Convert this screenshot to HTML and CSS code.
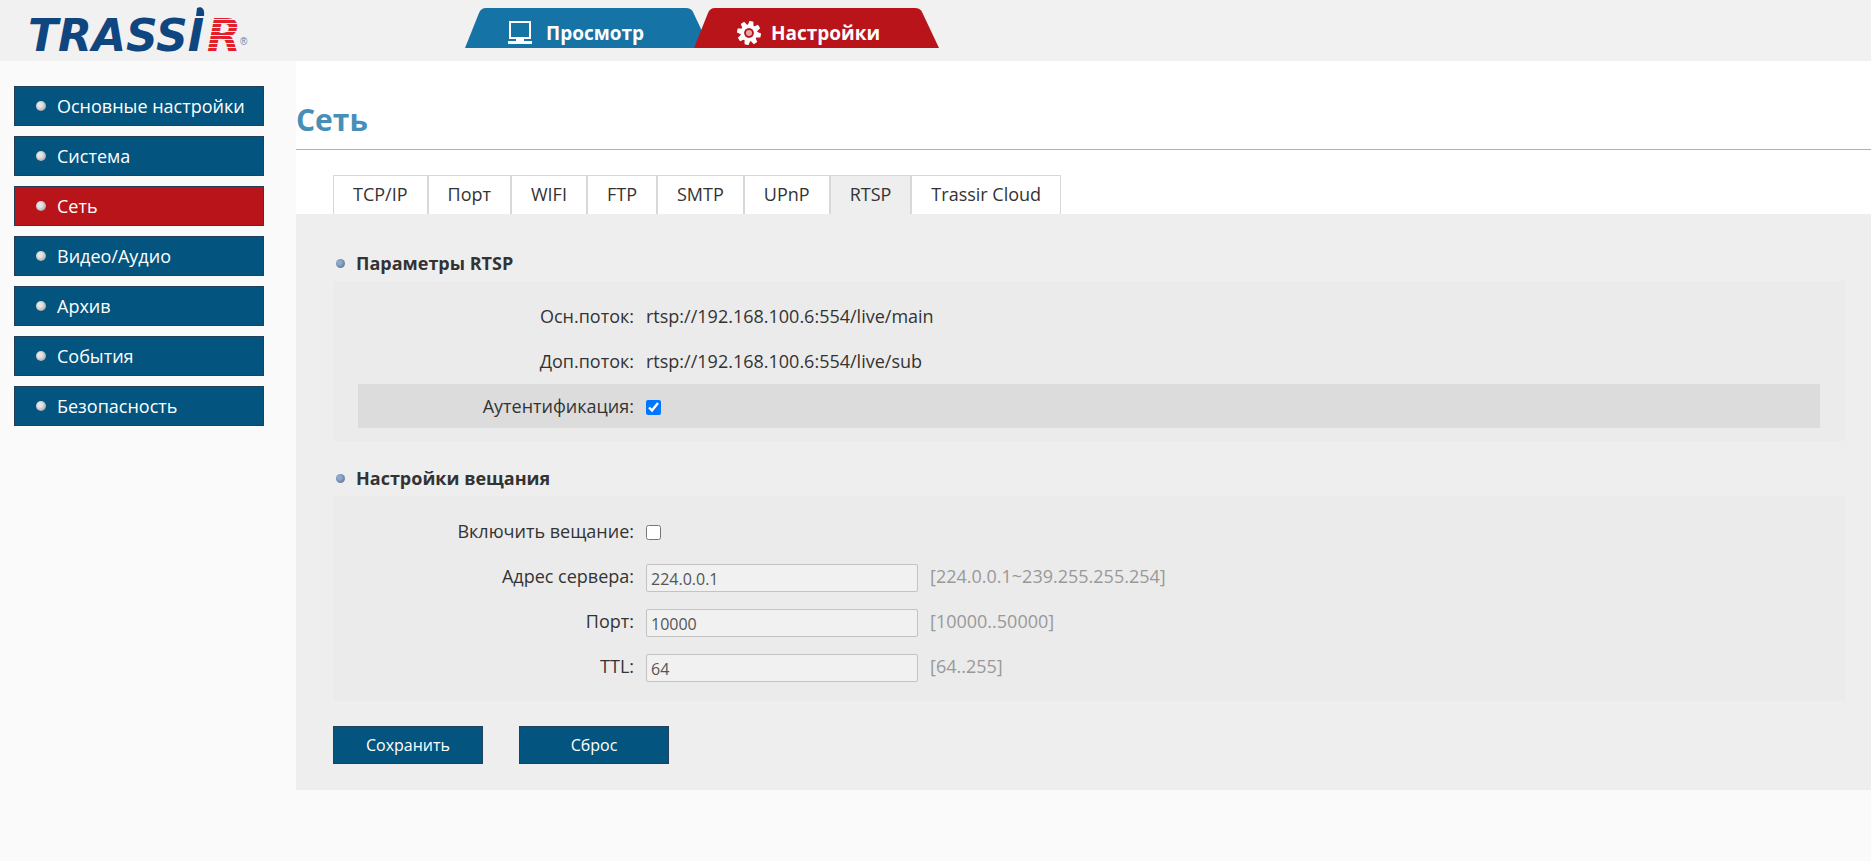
FILE: index.html
```html
<!DOCTYPE html>
<html lang="ru">
<head>
<meta charset="utf-8">
<meta name="viewport" content="width=device-width, initial-scale=1">
<title>TRASSIR</title>
<link rel="stylesheet" href="styles.css">
</head>
<body>
<header class="header">
  <div class="brand">
    <svg class="logo" width="240" height="60" viewBox="0 0 240 60" role="img" aria-label="TRASSIR">
      <defs>
        <pattern id="stripes" width="8" height="4" patternUnits="userSpaceOnUse">
          <rect width="8" height="3" fill="#e2202c"/>
        </pattern>
      </defs>
      <text class="logo-main" x="8" y="51">TRASSI</text>
      <path d="M177 8c4-2 8 0 7 8h-8z" fill="#0f467f"/>
      <text class="logo-accent" x="187" y="51" fill="url(#stripes)">R</text>
      <text class="logo-mark" x="220" y="45">®</text>
    </svg>
  </div>
  <nav class="modes">
    <a class="mode" href="#view">
      <svg width="24" height="24" viewBox="0 0 24 24" aria-hidden="true">
        <path d="M2 1h20v16H2z" fill="none" stroke="#fff" stroke-width="2"/>
        <path d="M8 18h8v2h8v3H0v-3h8z" fill="#fff"/>
      </svg>
      Просмотр
    </a>
    <a class="mode mode-active" href="#settings">
      <svg width="24" height="24" viewBox="-12 -12 24 24" aria-hidden="true">
        <g fill="#fff" transform="rotate(12)">
          <path d="M-3-7-2-12H2L3-7z"/>
          <path d="M-3-7-2-12H2L3-7z" transform="rotate(45)"/>
          <path d="M-3-7-2-12H2L3-7z" transform="rotate(90)"/>
          <path d="M-3-7-2-12H2L3-7z" transform="rotate(135)"/>
          <path d="M-3-7-2-12H2L3-7z" transform="rotate(180)"/>
          <path d="M-3-7-2-12H2L3-7z" transform="rotate(225)"/>
          <path d="M-3-7-2-12H2L3-7z" transform="rotate(270)"/>
          <path d="M-3-7-2-12H2L3-7z" transform="rotate(315)"/>
        </g>
        <circle r="6.5" fill="none" stroke="#fff" stroke-width="4"/>
        <circle r="4.8" fill="#b9141a"/>
        <circle r="3" fill="#e9a5a7"/>
      </svg>
      Настройки
    </a>
  </nav>
</header>
<div class="layout">
  <nav class="sidebar">
    <a class="side-link" href="#basic">Основные настройки</a>
    <a class="side-link" href="#system">Система</a>
    <a class="side-link side-active" href="#network">Сеть</a>
    <a class="side-link" href="#av">Видео/Аудио</a>
    <a class="side-link" href="#archive">Архив</a>
    <a class="side-link" href="#events">События</a>
    <a class="side-link" href="#security">Безопасность</a>
  </nav>
  <main class="main">
    <h1 class="title">Сеть</h1>
    <nav class="tabs">
      <a class="tab" href="#tcpip">TCP/IP</a>
      <a class="tab" href="#port">Порт</a>
      <a class="tab" href="#wifi">WIFI</a>
      <a class="tab" href="#ftp">FTP</a>
      <a class="tab" href="#smtp">SMTP</a>
      <a class="tab" href="#upnp">UPnP</a>
      <a class="tab tab-active" href="#rtsp">RTSP</a>
      <a class="tab" href="#cloud">Trassir Cloud</a>
    </nav>
    <form class="panel">
      <h2 class="section-title">Параметры RTSP</h2>
      <section class="group">
        <div class="row"><span class="label">Осн.поток:</span><span>rtsp://192.168.100.6:554/live/main</span></div>
        <div class="row"><span class="label">Доп.поток:</span><span>rtsp://192.168.100.6:554/live/sub</span></div>
        <div class="row row-highlight"><label class="label" for="auth">Аутентификация:</label><input class="check" type="checkbox" id="auth" checked></div>
      </section>
      <h2 class="section-title">Настройки вещания</h2>
      <section class="group">
        <div class="row"><label class="label" for="cast">Включить вещание:</label><input class="check" type="checkbox" id="cast"></div>
        <div class="row"><label class="label" for="addr">Адрес сервера:</label><input class="field" type="text" id="addr" value="224.0.0.1"><span class="hint">[224.0.0.1~239.255.255.254]</span></div>
        <div class="row"><label class="label" for="cport">Порт:</label><input class="field" type="text" id="cport" value="10000"><span class="hint">[10000..50000]</span></div>
        <div class="row"><label class="label" for="ttl">TTL:</label><input class="field" type="text" id="ttl" value="64"><span class="hint">[64..255]</span></div>
      </section>
      <div class="actions">
        <button class="button" type="button">Сохранить</button>
        <button class="button" type="button">Сброс</button>
      </div>
    </form>
  </main>
</div>
</body>
</html>
```
FILE: styles.css
```css
* { box-sizing: border-box; }
body {
  margin: 0;
  background: #fafafa;
  color: #333;
  font: 18px/24px "Open Sans", "Noto Sans", sans-serif;
}
a { color: inherit; text-decoration: none; }

.header {
  display: flex;
  height: 61px;
  padding-left: 20px;
  background: #f1f1f1;
}
.brand { width: 445px; }
.logo { display: block; overflow: visible; }
.logo-main, .logo-accent { font: italic bold 44px "DejaVu Sans", sans-serif; }
.logo-main { fill: #0f467f; }
.logo-mark { font: 10px "Liberation Sans", sans-serif; fill: #5f83a8; }

.modes { display: flex; padding-top: 8px; }
.mode {
  display: flex;
  align-items: center;
  gap: 14px;
  width: 245px;
  height: 40px;
  padding: 10px 0 0 43px;
  background: #1673a5;
  clip-path: path("M0 40 14 5Q16 0 21 0H221Q226 0 228 4L245 40Z");
  color: #fff;
  font-size: 19px;
  font-weight: 700;
}
.mode-active {
  gap: 10px;
  margin-left: -16px;
  background: #b9141a;
}

.layout { display: flex; align-items: flex-start; }
.sidebar {
  display: flex;
  flex: 0 0 296px;
  flex-direction: column;
  gap: 10px;
  padding: 25px 32px 0 14px;
}
.side-link {
  display: flex;
  align-items: center;
  gap: 11px;
  height: 40px;
  padding-left: 21px;
  border: 1px solid #23405a;
  background: #03557f;
  color: #fff;
}
.side-link::before {
  content: "";
  width: 10px;
  height: 10px;
  border-radius: 50%;
  background: radial-gradient(circle at 40% 40%, #e6e6e6 25%, #bbb 60%, #777);
}
.side-active { background: #b9141a; }

.main { flex: 1; min-width: 0; background: #fff; }
.title {
  margin: 0 0 25px;
  padding: 38px 0 8px;
  border-bottom: 1px solid #b0b0b0;
  color: #468fb8;
  font-size: 30px;
  line-height: 42px;
}
.tabs { display: flex; padding-left: 37px; }
.tab {
  height: 39px;
  padding: 6px 19px 0;
  border: 1px solid #d7d7dc;
  border-bottom: 0;
}
.tab-active { background: #eee; }

.panel { padding: 32px 26px 26px 37px; background: #eee; }
.section-title {
  display: flex;
  align-items: center;
  gap: 11px;
  margin: 0;
  padding: 5px 0 6px 3px;
  font-size: 18px;
  line-height: 24px;
}
.section-title::before {
  content: "";
  width: 9px;
  height: 9px;
  border-radius: 50%;
  background: radial-gradient(circle at 40% 40%, #8fa8cc 25%, #6f86a8 60%, #66707d);
}
.group {
  display: grid;
  gap: 1px;
  margin-bottom: 20px;
  padding: 13px 25px;
  background: #ebebeb;
}
.row { display: flex; align-items: center; height: 44px; }
.row-highlight { background: #dcdcdc; }
.label { width: 276px; margin-right: 12px; text-align: right; }
.check { width: 15px; height: 15px; margin: 3px 0 0; accent-color: #0075ff; }
.field {
  width: 272px;
  height: 28px;
  margin-top: 4px;
  padding: 2px 4px 0;
  border: 1px solid #c3c3c3;
  border-radius: 2px;
  background: #f1f1f1;
  color: #555;
  font: 16px "Open Sans", "Noto Sans", sans-serif;
}
.hint { margin-left: 12px; color: #999; }
.actions { display: flex; gap: 36px; padding-top: 5px; }
.button {
  width: 150px;
  height: 38px;
  padding: 0;
  border: 1px solid #23405a;
  background: #03557f;
  color: #fff;
  font: 16px "Open Sans", "Noto Sans", sans-serif;
}
```
